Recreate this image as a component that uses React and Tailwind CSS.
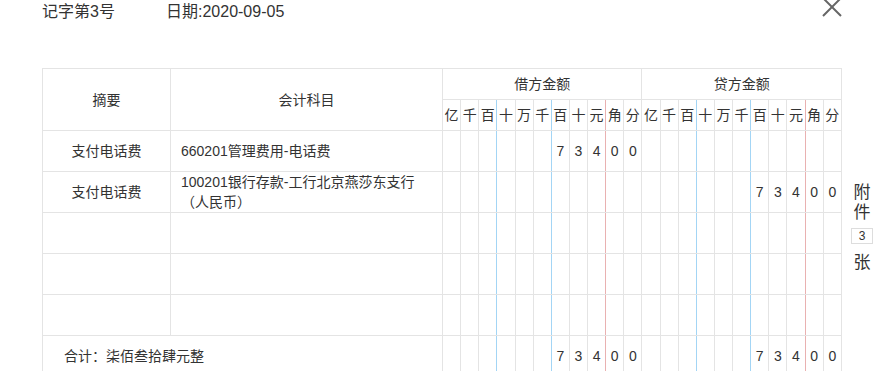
import React from 'react';

const UNITS = ['亿', '千', '百', '十', '万', '千', '百', '十', '元', '角', '分'];

// right border colour of each amount column inside a group
const SEP = [
  'border-r-[#e4e4e4]',
  'border-r-[#e4e4e4]',
  'border-r-[#a3d5f5]',
  'border-r-[#e4e4e4]',
  'border-r-[#e4e4e4]',
  'border-r-[#a3d5f5]',
  'border-r-[#e4e4e4]',
  'border-r-[#e4e4e4]',
  'border-r-[#e9b1b1]',
  'border-r-[#e4e4e4]',
  'border-r-[#e4e4e4]',
];

const toCells = (amount) => {
  const cells = Array(11).fill('');
  if (!amount) return cells;
  const digits = String(Math.round(amount * 100));
  const start = 11 - digits.length;
  digits.split('').forEach((d, i) => {
    cells[start + i] = d;
  });
  return cells;
};

const rows = [
  { summary: '支付电话费', account: ['660201管理费用-电话费'], debit: 734, credit: 0 },
  { summary: '支付电话费', account: ['100201银行存款-工行北京燕莎东支行', '（人民币）'], debit: 0, credit: 734 },
  { summary: '', account: [], debit: 0, credit: 0 },
  { summary: '', account: [], debit: 0, credit: 0 },
  { summary: '', account: [], debit: 0, credit: 0 },
];

function AmountCells({ amount, keyPrefix }) {
  return (
    <>
      {toCells(amount).map((d, i) => (
        <td
          key={`${keyPrefix}-${i}`}
          className={`border border-[#e4e4e4] ${SEP[i]} p-0 text-center`}
        >
          {d}
        </td>
      ))}
    </>
  );
}

export default function App() {
  return (
    <div
      className="relative w-[878px] h-[371px] overflow-hidden bg-white text-[#333] pl-[42px]"
      style={{ fontFamily: '"Liberation Sans", "Noto Sans CJK SC", sans-serif' }}
    >
      {/* close */}
      <button className="absolute top-[-3px] right-[36px] w-[20px] h-[20px]">
        <svg width="20" height="20" viewBox="0 0 20 20">
          <path d="M1 1 L19 19 M19 1 L1 19" stroke="#666" strokeWidth="2" fill="none" />
        </svg>
      </button>

      <div className="flex pt-[1px] text-[16px] leading-[22px]">
        <span className="w-[124px]">记字第3号</span>
        <span>日期:2020-09-05</span>
      </div>

      <div className="flex mt-[45px]">
        <table className="w-[800px] shrink-0 table-fixed border-collapse text-[14px] leading-[20px]">
          <colgroup>
            <col className="w-[128px]" />
            <col className="w-[272px]" />
          </colgroup>
          <thead>
            <tr className="h-[31px]">
              <th rowSpan={2} className="border border-[#e4e4e4] font-normal">摘要</th>
              <th rowSpan={2} className="border border-[#e4e4e4] font-normal">会计科目</th>
              <th colSpan={11} className="border border-[#e4e4e4] font-normal">借方金额</th>
              <th colSpan={11} className="border border-[#e4e4e4] font-normal">贷方金额</th>
            </tr>
            <tr className="h-[31px]">
              {[...UNITS, ...UNITS].map((u, i) => (
                <th
                  key={i}
                  className={`border border-[#e4e4e4] ${SEP[i % 11]} p-0 font-normal`}
                >
                  {u}
                </th>
              ))}
            </tr>
          </thead>
          <tbody>
            {rows.map((r, i) => (
              <tr key={i} className="h-[41px]">
                <td className="border border-[#e4e4e4] text-center">{r.summary}</td>
                <td className="border border-[#e4e4e4] px-[10px]">
                  {r.account.map((line, j) => (
                    <div key={j}>{line}</div>
                  ))}
                </td>
                <AmountCells amount={r.debit} keyPrefix={`d${i}`} />
                <AmountCells amount={r.credit} keyPrefix={`c${i}`} />
              </tr>
            ))}
            <tr className="h-[41px]">
              <td colSpan={2} className="border border-[#e4e4e4] pl-[21px]">合计：柒佰叁拾肆元整</td>
              <AmountCells amount={734} keyPrefix="td" />
              <AmountCells amount={734} keyPrefix="tc" />
            </tr>
          </tbody>
        </table>

        <div className="flex flex-col items-center shrink-0 w-[22px] ml-[9px] mt-[115px] text-[17px] leading-[20px]">
          <span>附</span>
          <span>件</span>
          <span className="mt-[5px] w-[22px] h-[16px] border border-[#ddd] text-[12px] leading-[14px] text-center">3</span>
          <span className="mt-[9px]">张</span>
        </div>
      </div>
    </div>
  );
}
